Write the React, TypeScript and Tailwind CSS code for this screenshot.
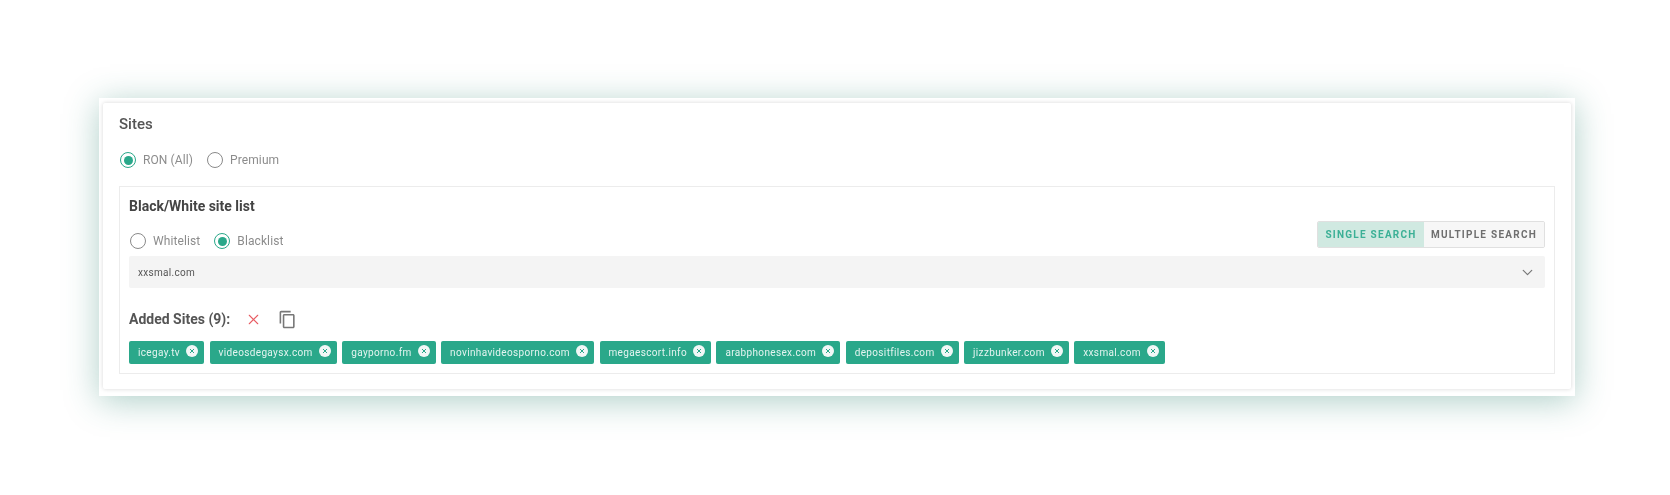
import React from 'react';
import { ChevronDown, X } from 'lucide-react';
import { MdOutlineContentCopy } from 'react-icons/md';

const sites = [
  'icegay.tv',
  'videosdegaysx.com',
  'gayporno.fm',
  'novinhavideosporno.com',
  'megaescort.info',
  'arabphonesex.com',
  'depositfiles.com',
  'jizzbunker.com',
  'xxsmal.com',
];

const Radio = ({ label, checked }: { label: string; checked?: boolean }) => (
  <label className="flex items-center gap-[7px]">
    <span
      className={`flex h-[16px] w-[16px] items-center justify-center rounded-full border-[1.5px] ${
        checked ? 'border-[#2aa88a]' : 'border-[#8a8a8a]'
      }`}
    >
      {checked && <span className="h-[9px] w-[9px] rounded-full bg-[#2aa88a]" />}
    </span>
    <span className="text-[12px] tracking-[0.1px] text-[#8c8c8c]">{label}</span>
  </label>
);

const SiteTag = ({ name }: { name: string }) => (
  <div className="flex h-[23px] items-center gap-[6px] rounded-[2px] bg-[#2aa88a] pl-[9px] pr-[6px] text-white">
    <span className="text-[10px] tracking-[0.35px] text-[#e4f4f0]">{name}</span>
    <svg viewBox="0 0 12 12" className="mb-[3px] h-[12px] w-[12px]">
      <circle cx="6" cy="6" r="6" fill="#f2f7f6" />
      <path d="M4 4l4 4M8 4l-4 4" stroke="#2aa88a" strokeWidth="1" />
    </svg>
  </div>
);

export default function App() {
  return (
    <div className="min-h-[495px] bg-white pl-[99px] pt-[98px] font-['Roboto',sans-serif] blur-[0.4px]">
      <div className="h-[298px] w-[1476px] bg-white px-[4px] pt-[5px] shadow-[0_5px_32px_rgba(42,130,110,0.38)]">
        <div className="h-[286px] rounded-[2px] bg-white px-[16px] pt-[11px] shadow-[0_0_4px_rgba(0,0,0,0.16)]">
          <h2 className="text-[15px] leading-[20px] font-medium text-[#555]">Sites</h2>

          <div className="mt-[17px] flex items-center gap-[14px] pl-[1px]">
            <Radio label="RON (All)" checked />
            <Radio label="Premium" />
          </div>

          <div className="mt-[17px] h-[188px] border border-[#ececec] px-[9px] pt-[10px]">
            <h3 className="text-[14px] leading-[18px] font-bold text-[#444]">Black/White site list</h3>

            <div className="mt-[5px] flex h-[34px] items-start justify-between">
              <div className="flex items-center gap-[14px] pl-[1px] pt-[12px]">
                <Radio label="Whitelist" />
                <Radio label="Blacklist" checked />
              </div>
              <div className="mt-[1px] flex h-[27px] overflow-hidden rounded-[2px] border border-[#e0e0e0] text-[10px] font-bold tracking-[1.25px]">
                <button type="button" className="w-[106px] bg-[#d0e9e1] text-[#3bb096]">
                  SINGLE SEARCH
                </button>
                <button type="button" className="w-[120px] bg-[#f7f7f7] text-[#6f6f6f]">
                  MULTIPLE SEARCH
                </button>
              </div>
            </div>

            <div className="mt-[2px] flex h-[32px] items-center justify-between rounded-[2px] bg-[#f4f4f4] pl-[9px] pr-[9px]">
              <span className="text-[10px] tracking-[0.3px] text-[#555]">xxsmal.com</span>
              <ChevronDown size={17} strokeWidth={1.7} className="text-[#777]" />
            </div>

            <div className="mt-[20px] flex h-[22px] items-center">
              <span className="text-[14px] font-bold text-[#555]">Added Sites (9):</span>
              <X size={17} strokeWidth={1.5} className="ml-[15px] text-[#e85c63]" />
              <MdOutlineContentCopy size={19} className="ml-[16px] text-[#777]" />
            </div>

            <div className="mt-[11px] flex gap-[5.5px]">
              {sites.map((site) => (
                <SiteTag key={site} name={site} />
              ))}
            </div>
          </div>
        </div>
      </div>
    </div>
  );
}
